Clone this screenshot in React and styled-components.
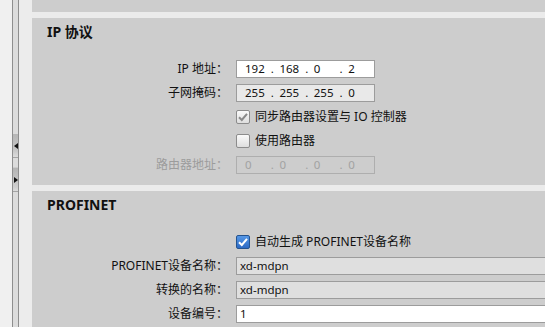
import React from 'react';
import styled, { createGlobalStyle } from 'styled-components';

const Global = createGlobalStyle`
  html, body { margin: 0; padding: 0; background: #f0f0f0; overflow: hidden; }
  body { font-family: "Noto Sans", "Noto Sans CJK SC", sans-serif; }
`;

const Screen = styled.div`
  display: flex;
  width: 545px;
  height: 327px;
  overflow: hidden;
`;

const Gutter = styled.div`
  width: ${p => p.w}px;
  flex-shrink: 0;
  background: ${p => p.bg};
`;

const Splitter = styled.div`
  width: 5px;
  flex-shrink: 0;
  border-left: 1px solid #8e8e8e;
  border-right: 1px solid #8e8e8e;
  background: #dcdcdc;
  display: flex;
  flex-direction: column;
  padding-top: 134px;
`;

const SplitBtn = styled.div`
  height: ${p => p.h}px;
  border-bottom: 1px solid #a4a4a4;
  background: ${p => p.bg};
  display: flex;
  align-items: ${p => p.align};
  justify-content: center;
  padding-bottom: ${p => p.pb}px;
  box-sizing: border-box;
`;

const Arrow = styled.div`
  width: 0;
  height: 0;
  border-top: 3px solid transparent;
  border-bottom: 3px solid transparent;
  ${p => (p.dir === 'left' ? 'border-right: 4px solid #111;' : 'border-left: 4px solid #111;')}
`;

const Content = styled.div`
  flex: 1;
  background: #ebebeb;
  display: flex;
  flex-direction: column;
  gap: 6px;
  min-width: 0;
`;

const Panel = styled.div`
  background: #cdcdcd;
  flex-shrink: 0;
  height: ${p => (p.h ? `${p.h}px` : 'auto')};
  padding: ${p => (p.h ? '0' : '5px 0 11px 0')};
  overflow: hidden;
  ${p => p.grow && 'flex: 1;'}
`;

const Heading = styled.div`
  margin-left: 15px;
  font-family: "Noto Sans", "Noto Sans CJK SC", sans-serif;
  font-weight: 700;
  font-size: 14px;
  line-height: 18px;
  color: #111;
  margin-bottom: 19px;
`;

const Form = styled.div`
  display: grid;
  grid-template-columns: 196px 340px;
  column-gap: 8px;
  row-gap: 6px;
  grid-auto-rows: 18px;
`;

const Label = styled.div`
  text-align: right;
  font-size: 12px;
  line-height: 18px;
  color: ${p => (p.disabled ? '#9c9c9c' : '#111')};
  white-space: nowrap;
`;

const Field = styled.div`
  box-sizing: border-box;
  height: 18px;
  width: ${p => (p.wide ? '340px' : '139px')};
  border: 1px solid ${p => (p.disabled ? '#aeaeae' : '#9c9c9c')};
  background: ${p => p.bg};
  color: ${p => (p.disabled ? '#a2a2a2' : '#111')};
  font-size: 11.5px;
  line-height: 16px;
  padding-left: ${p => (p.ip ? 8 : 3)}px;
  display: flex;
  align-items: center;
  white-space: nowrap;
`;

const Octet = styled.span`
  width: 27px;
`;

const Dot = styled.span`
  width: 9px;
`;

const CheckRow = styled.label`
  display: flex;
  align-items: center;
  gap: 5px;
  font-size: 12px;
  line-height: 18px;
  color: #111;
  white-space: nowrap;
`;

const Box = styled.span`
  box-sizing: border-box;
  width: 14px;
  height: 14px;
  border: 1px solid ${p => (p.blue ? '#24538f' : '#8c8c8c')};
  border-radius: 2px;
  background: ${p =>
    p.blue ? 'linear-gradient(#5597e6, #2c6ac4)' : 'linear-gradient(#fafafa, #dedede)'};
  display: flex;
  align-items: center;
  justify-content: center;
`;

function Check({ color }) {
  return (
    <svg width="12" height="12" viewBox="0 0 12 12">
      <path d="M2 6.2 L4.8 9 L10 2.8" fill="none" stroke={color} strokeWidth="2" />
    </svg>
  );
}

function IpValue({ parts }) {
  return parts.map((p, i) => (
    <React.Fragment key={i}>
      <Octet>{p}</Octet>
      {i < 3 && <Dot>.</Dot>}
    </React.Fragment>
  ));
}

export default function App() {
  return (
    <Screen>
      <Global />
      <Gutter w={12} bg="#f0f0f0" />
      <Splitter>
        <SplitBtn h={24} align="center" pb={0} bg="linear-gradient(#b6b6b6, #c6c6c6 70%, #dcdcdc)">
          <Arrow dir="left" />
        </SplitBtn>
        <SplitBtn h={34} align="flex-end" pb={8} bg="linear-gradient(#dcdcdc 28%, #b4b4b4 30%, #cecece 88%, #dcdcdc)">
          <Arrow dir="right" />
        </SplitBtn>
      </Splitter>
      <Gutter w={13} bg="#ececec" />
      <Content>
        <Panel h={12} />
        <Panel>
          <Heading>IP 协议</Heading>
          <Form>
            <Label>IP 地址：</Label>
            <Field ip bg="#ffffff">
              <IpValue parts={['192', '168', '0', '2']} />
            </Field>
            <Label>子网掩码：</Label>
            <Field ip bg="#e9e9e9">
              <IpValue parts={['255', '255', '255', '0']} />
            </Field>
            <span />
            <CheckRow>
              <Box><Check color="#8a8a8a" /></Box>
              同步路由器设置与 IO 控制器
            </CheckRow>
            <span />
            <CheckRow>
              <Box />
              使用路由器
            </CheckRow>
            <Label disabled>路由器地址：</Label>
            <Field ip disabled bg="#cdcdcd">
              <IpValue parts={['0', '0', '0', '0']} />
            </Field>
          </Form>
        </Panel>
        <Panel grow>
          <Heading>PROFINET</Heading>
          <Form>
            <span />
            <CheckRow>
              <Box blue><Check color="#ffffff" /></Box>
              自动生成 PROFINET设备名称
            </CheckRow>
            <Label>PROFINET设备名称：</Label>
            <Field wide bg="#dfdfdf">xd-mdpn</Field>
            <Label>转换的名称：</Label>
            <Field wide bg="#dfdfdf">xd-mdpn</Field>
            <Label>设备编号：</Label>
            <Field wide bg="#ffffff">1</Field>
          </Form>
        </Panel>
      </Content>
    </Screen>
  );
}
